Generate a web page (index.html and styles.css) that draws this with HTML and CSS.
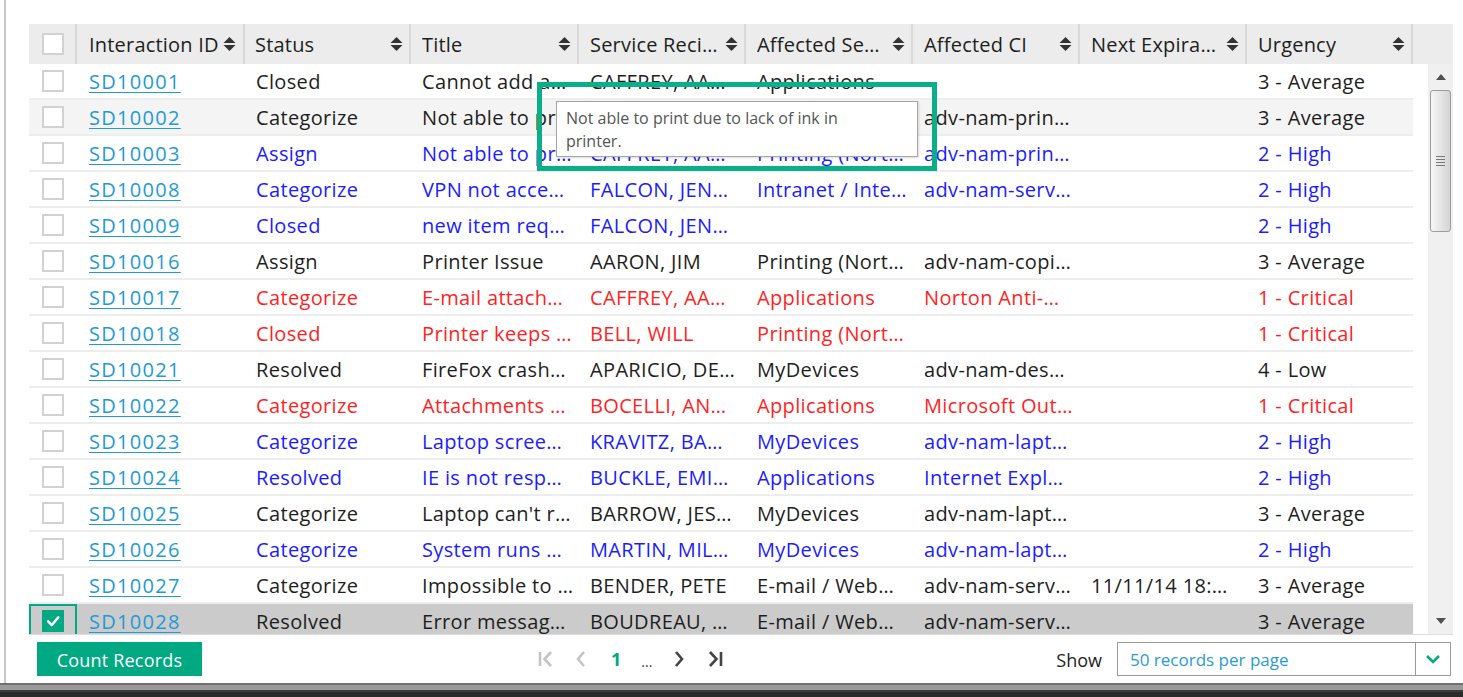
FILE: index.html
```html
<!DOCTYPE html>
<html>
<head>
<meta charset="utf-8">
<link rel="stylesheet" href="styles.css">
</head>
<body>
<div class="frame">
  <div class="grid">
    <div class="head">
      <div class="hc chk"><span class="cb"></span></div>
      <div class="hc"><span class="ht">Interaction ID</span><svg class="sort" viewBox="0 0 13 16"><polygon points="0.5,7 6.5,1 12.5,7"/><polygon points="0.5,9 6.5,15 12.5,9"/></svg></div>
      <div class="hc"><span class="ht">Status</span><svg class="sort" viewBox="0 0 13 16"><polygon points="0.5,7 6.5,1 12.5,7"/><polygon points="0.5,9 6.5,15 12.5,9"/></svg></div>
      <div class="hc"><span class="ht">Title</span><svg class="sort" viewBox="0 0 13 16"><polygon points="0.5,7 6.5,1 12.5,7"/><polygon points="0.5,9 6.5,15 12.5,9"/></svg></div>
      <div class="hc"><span class="ht">Service Reci…</span><svg class="sort" viewBox="0 0 13 16"><polygon points="0.5,7 6.5,1 12.5,7"/><polygon points="0.5,9 6.5,15 12.5,9"/></svg></div>
      <div class="hc"><span class="ht">Affected Se…</span><svg class="sort" viewBox="0 0 13 16"><polygon points="0.5,7 6.5,1 12.5,7"/><polygon points="0.5,9 6.5,15 12.5,9"/></svg></div>
      <div class="hc"><span class="ht">Affected CI</span><svg class="sort" viewBox="0 0 13 16"><polygon points="0.5,7 6.5,1 12.5,7"/><polygon points="0.5,9 6.5,15 12.5,9"/></svg></div>
      <div class="hc"><span class="ht">Next Expira…</span><svg class="sort" viewBox="0 0 13 16"><polygon points="0.5,7 6.5,1 12.5,7"/><polygon points="0.5,9 6.5,15 12.5,9"/></svg></div>
      <div class="hc"><span class="ht">Urgency</span><svg class="sort" viewBox="0 0 13 16"><polygon points="0.5,7 6.5,1 12.5,7"/><polygon points="0.5,9 6.5,15 12.5,9"/></svg></div>
      <div class="hfill"></div>
    </div>
    <div class="body">
      <div class="rows">
        <div class="row"><div class="c chk"><span class="cb"></span></div><div class="c id"><a href="#">SD10001</a></div><div class="c">Closed</div><div class="c">Cannot add a…</div><div class="c">CAFFREY, AA…</div><div class="c">Applications</div><div class="c"></div><div class="c"></div><div class="c">3 - Average</div></div>
        <div class="row hover"><div class="c chk"><span class="cb"></span></div><div class="c id"><a href="#">SD10002</a></div><div class="c">Categorize</div><div class="c">Not able to pr…</div><div class="c">CAFFREY, AA…</div><div class="c">Printing (Nort…</div><div class="c">adv-nam-prin…</div><div class="c"></div><div class="c">3 - Average</div></div>
        <div class="row blue"><div class="c chk"><span class="cb"></span></div><div class="c id"><a href="#">SD10003</a></div><div class="c">Assign</div><div class="c">Not able to pr…</div><div class="c">CAFFREY, AA…</div><div class="c">Printing (Nort…</div><div class="c">adv-nam-prin…</div><div class="c"></div><div class="c">2 - High</div></div>
        <div class="row blue"><div class="c chk"><span class="cb"></span></div><div class="c id"><a href="#">SD10008</a></div><div class="c">Categorize</div><div class="c">VPN not acce…</div><div class="c">FALCON, JEN…</div><div class="c">Intranet / Inte…</div><div class="c">adv-nam-serv…</div><div class="c"></div><div class="c">2 - High</div></div>
        <div class="row blue"><div class="c chk"><span class="cb"></span></div><div class="c id"><a href="#">SD10009</a></div><div class="c">Closed</div><div class="c">new item req…</div><div class="c">FALCON, JEN…</div><div class="c"></div><div class="c"></div><div class="c"></div><div class="c">2 - High</div></div>
        <div class="row"><div class="c chk"><span class="cb"></span></div><div class="c id"><a href="#">SD10016</a></div><div class="c">Assign</div><div class="c">Printer Issue</div><div class="c">AARON, JIM</div><div class="c">Printing (Nort…</div><div class="c">adv-nam-copi…</div><div class="c"></div><div class="c">3 - Average</div></div>
        <div class="row red"><div class="c chk"><span class="cb"></span></div><div class="c id"><a href="#">SD10017</a></div><div class="c">Categorize</div><div class="c">E-mail attach…</div><div class="c">CAFFREY, AA…</div><div class="c">Applications</div><div class="c">Norton Anti-…</div><div class="c"></div><div class="c">1 - Critical</div></div>
        <div class="row red"><div class="c chk"><span class="cb"></span></div><div class="c id"><a href="#">SD10018</a></div><div class="c">Closed</div><div class="c">Printer keeps …</div><div class="c">BELL, WILL</div><div class="c">Printing (Nort…</div><div class="c"></div><div class="c"></div><div class="c">1 - Critical</div></div>
        <div class="row"><div class="c chk"><span class="cb"></span></div><div class="c id"><a href="#">SD10021</a></div><div class="c">Resolved</div><div class="c">FireFox crash…</div><div class="c">APARICIO, DE…</div><div class="c">MyDevices</div><div class="c">adv-nam-des…</div><div class="c"></div><div class="c">4 - Low</div></div>
        <div class="row red"><div class="c chk"><span class="cb"></span></div><div class="c id"><a href="#">SD10022</a></div><div class="c">Categorize</div><div class="c">Attachments …</div><div class="c">BOCELLI, AN…</div><div class="c">Applications</div><div class="c">Microsoft Out…</div><div class="c"></div><div class="c">1 - Critical</div></div>
        <div class="row blue"><div class="c chk"><span class="cb"></span></div><div class="c id"><a href="#">SD10023</a></div><div class="c">Categorize</div><div class="c">Laptop scree…</div><div class="c">KRAVITZ, BA…</div><div class="c">MyDevices</div><div class="c">adv-nam-lapt…</div><div class="c"></div><div class="c">2 - High</div></div>
        <div class="row blue"><div class="c chk"><span class="cb"></span></div><div class="c id"><a href="#">SD10024</a></div><div class="c">Resolved</div><div class="c">IE is not resp…</div><div class="c">BUCKLE, EMI…</div><div class="c">Applications</div><div class="c">Internet Expl…</div><div class="c"></div><div class="c">2 - High</div></div>
        <div class="row"><div class="c chk"><span class="cb"></span></div><div class="c id"><a href="#">SD10025</a></div><div class="c">Categorize</div><div class="c">Laptop can't r…</div><div class="c">BARROW, JES…</div><div class="c">MyDevices</div><div class="c">adv-nam-lapt…</div><div class="c"></div><div class="c">3 - Average</div></div>
        <div class="row blue"><div class="c chk"><span class="cb"></span></div><div class="c id"><a href="#">SD10026</a></div><div class="c">Categorize</div><div class="c">System runs …</div><div class="c">MARTIN, MIL…</div><div class="c">MyDevices</div><div class="c">adv-nam-lapt…</div><div class="c"></div><div class="c">2 - High</div></div>
        <div class="row"><div class="c chk"><span class="cb"></span></div><div class="c id"><a href="#">SD10027</a></div><div class="c">Categorize</div><div class="c">Impossible to …</div><div class="c">BENDER, PETE</div><div class="c">E-mail / Web…</div><div class="c">adv-nam-serv…</div><div class="c">11/11/14 18:…</div><div class="c">3 - Average</div></div>
        <div class="row selected"><div class="c chk focus"><span class="cb on"><svg viewBox="0 0 22 22"><path d="M5 11.5 L9.5 16 L17.5 6.5"/></svg></span></div><div class="c id"><a href="#">SD10028</a></div><div class="c">Resolved</div><div class="c">Error messag…</div><div class="c">BOUDREAU, …</div><div class="c">E-mail / Web…</div><div class="c">adv-nam-serv…</div><div class="c"></div><div class="c">3 - Average</div></div>
      </div>
      <div class="sbgap"></div>
      <div class="scrollbar">
        <svg class="sbarrow" viewBox="0 0 10 6"><polygon points="0,6 5,0 10,6"/></svg>
        <div class="thumb"><span class="grip"></span><span class="grip"></span><span class="grip"></span><span class="grip"></span></div>
        <svg class="sbarrow down" viewBox="0 0 10 6"><polygon points="0,0 5,6 10,0"/></svg>
      </div>
    </div>
  </div>
  <div class="foot">
    <button class="btn">Count Records</button>
    <div class="pager">
      <svg class="pg dim" viewBox="0 0 16 18"><path d="M2 2 V16 M13 2 L6.5 9 L13 16"/></svg>
      <svg class="pg dim" viewBox="0 0 12 18"><path d="M9 2 L3 9 L9 16"/></svg>
      <span class="pnum">1</span>
      <span class="pdots">...</span>
      <svg class="pg" viewBox="0 0 12 18"><path d="M3 2 L9 9 L3 16"/></svg>
      <svg class="pg" viewBox="0 0 16 18"><path d="M3 2 L9.5 9 L3 16 M14 2 V16"/></svg>
    </div>
    <div class="show">
      <span class="showlbl">Show</span>
      <div class="select"><span class="selval">50 records per page</span><span class="selbtn"><svg viewBox="0 0 16 10"><path d="M2 2 L8 8 L14 2"/></svg></span></div>
    </div>
  </div>
  <div class="tooltip">Not able to print due to lack of ink in printer.</div>
  <div class="annot"></div>
</div>
<div class="band"></div>
</body>
</html>
```

FILE: styles.css
```css
* { box-sizing: border-box; }
html, body { margin: 0; padding: 0; background: #fff; }
body {
  width: 1463px;
  height: 697px;
  overflow: hidden;
  font-family: "Open Sans", "Noto Sans", "DejaVu Sans", sans-serif;
  color: #1e1e1e;
}
.frame {
  position: relative;
  margin-left: 4px;
  height: 683px;
  border-left: 2px solid #c8c8c8;
  padding: 24px 0 0 23px;
}
.grid { width: 1424px; }
.head {
  display: grid;
  grid-template-columns: 48px 168px 166px 168px 167px 167px 167px 167px 166px 40px;
  height: 40px;
  background: #ececec;
}
.hc {
  display: flex;
  align-items: center;
  padding: 0 6px 0 12px;
  border-right: 2px solid #d9d9d9;
  font-size: 20px;
  letter-spacing: 0.2px;
  white-space: nowrap;
  overflow: hidden;
  color: #1e1e1e;
}
.hc:nth-child(3) { padding-left: 10px; }
.hc:nth-child(4), .hc:nth-child(5), .hc:nth-child(6), .hc:nth-child(7), .hc:nth-child(8), .hc:nth-child(9) { padding-left: 11px; }
.hc.chk { padding-left: 13px; }
.ht { overflow: hidden; }
.sort {
  flex: none;
  width: 13px;
  height: 16px;
  margin-left: auto;
  fill: #333;
}
.hc:nth-child(2) .sort { margin-left: 4px; }
.hfill { background: #ececec; }

.cb {
  display: block;
  width: 22px;
  height: 22px;
  border: 2px solid #d2d2d2;
  background: #fff;
}
.cb.on {
  background: #01a982;
  border-color: #01a982;
}
.cb.on svg {
  display: block;
  width: 18px;
  height: 18px;
  fill: none;
  stroke: #fff;
  stroke-width: 3;
  stroke-linecap: round;
  stroke-linejoin: round;
}

.body {
  display: flex;
  height: 571px;
  overflow: hidden;
  border-bottom: 1px solid #dddddd;
}
.rows { width: 1384px; flex: none; }
.row {
  display: grid;
  grid-template-columns: 48px 168px 166px 168px 167px 167px 167px 167px 166px;
  height: 36px;
  border-bottom: 2px solid #ededed;
  background: #fff;
  font-size: 20px;
  letter-spacing: 0.35px;
  line-height: 34px;
  padding-top: 1px;
  color: #1e1e1e;
}
.row.hover { background: #f4f4f4; }
.row.selected { background: #cbcbcb; }
.row.blue { color: #1c1cff; }
.row.red { color: #ff1f1f; }
.c {
  padding-left: 11px;
  white-space: nowrap;
  overflow: hidden;
}
.c.id { padding-left: 12px; }
.c.chk { padding: 5px 0 0 13px; }
.c.chk.focus {
  outline: 2px solid #01a982;
  outline-offset: -2px;
  margin-top: -1px;
  padding-top: 6px;
}
.c a {
  color: #1f9ad6;
  letter-spacing: 1.3px;
  text-decoration: underline;
  text-underline-offset: 3px;
  text-decoration-thickness: 1px;
}
.sbgap { width: 15px; flex: none; }
.scrollbar {
  width: 25px;
  flex: none;
  background: #f0f0f0;
  display: flex;
  flex-direction: column;
  align-items: center;
  padding: 10px 0 10px;
}
.sbarrow {
  width: 10px;
  height: 6px;
  fill: #505050;
  flex: none;
}
.sbarrow.down { margin-top: auto; }
.thumb {
  margin-top: 10px;
  width: 21px;
  height: 142px;
  border: 1px solid #9c9c9c;
  border-radius: 3px;
  background: linear-gradient(90deg, #f6f6f6 0%, #e6e6e6 50%, #d4d4d4 100%);
  display: flex;
  flex-direction: column;
  align-items: center;
  justify-content: center;
  gap: 2px;
}
.grip {
  display: block;
  width: 9px;
  height: 1px;
  background: #777;
}

.foot {
  display: flex;
  align-items: center;
  height: 48px;
  padding-right: 2px;
  width: 1424px;
}
.btn {
  margin-left: 8px;
  width: 165px;
  height: 34px;
  border: none;
  background: #01a982;
  color: #fff;
  font-family: inherit;
  font-size: 18px;
  letter-spacing: 0.2px;
  padding: 2px 0 0;
}
.pager {
  display: flex;
  align-items: center;
  margin-left: 336px;
  height: 34px;
}
.pg {
  width: 16px;
  height: 18px;
  fill: none;
  stroke: #444;
  stroke-width: 2.6;
}
.pg:nth-child(2), .pg:nth-child(5) { width: 12px; }
.pg.dim { stroke: #c4c4c4; }
.pg:nth-child(1) { margin-right: 21px; }
.pg:nth-child(2) { margin-right: 24px; }
.pnum {
  color: #01a982;
  font-weight: 700;
  font-size: 18px;
  margin-right: 20px;
}
.pdots {
  font-size: 14px;
  color: #333;
  margin-right: 21px;
  position: relative;
  top: 2px;
}
.pg:nth-child(5) { margin-right: 22px; }
.show {
  margin-left: auto;
  display: flex;
  align-items: center;
}
.showlbl {
  font-size: 18px;
  color: #1e1e1e;
  margin-right: 15px;
  padding-top: 2px;
}
.select {
  width: 334px;
  height: 34px;
  border: 1px solid #9a9a9a;
  display: flex;
  align-items: center;
  background: #fff;
}
.selval {
  flex: 1;
  padding-left: 12px;
  font-size: 17px;
  color: #2a9ad4;
}
.selbtn {
  width: 35px;
  height: 100%;
  border-left: 1px solid #9a9a9a;
  display: flex;
  align-items: center;
  justify-content: center;
}
.selbtn svg {
  width: 16px;
  height: 10px;
  fill: none;
  stroke: #01a982;
  stroke-width: 2.6;
}

.tooltip {
  position: absolute;
  left: 550px;
  top: 101px;
  width: 362px;
  height: 56px;
  padding: 5px 50px 5px 9px;
  background: #fff;
  border: 1.5px solid #a6a6a6;
  box-shadow: 1px 1px 2px rgba(0,0,0,0.15);
  font-size: 16px;
  line-height: 23px;
  color: #555;
}
.annot {
  position: absolute;
  left: 531px;
  top: 82px;
  width: 400px;
  height: 89px;
  border: 5px solid #0aae88;
}
.band {
  height: 14px;
  background: linear-gradient(#707070 0 2px, #9a9a9a 2px 7px, #3a3a3a 7px 9px, #2a2a2a 9px);
}
```
